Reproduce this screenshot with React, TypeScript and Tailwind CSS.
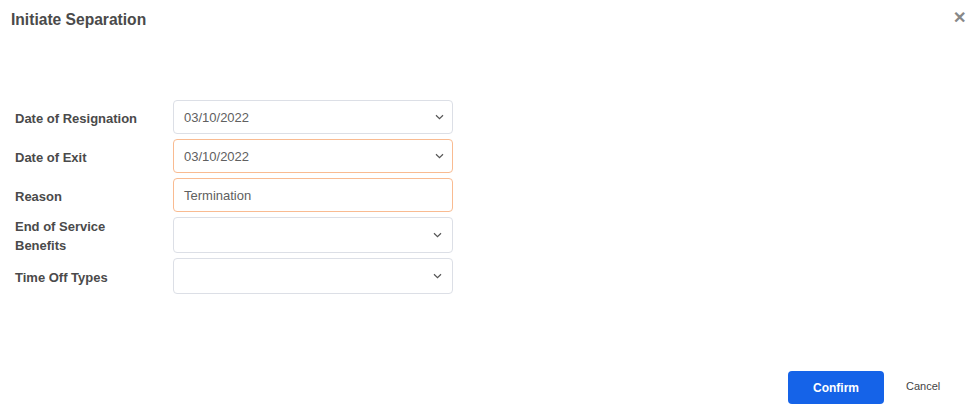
import React from "react";

const Chevron = () => (
  <svg width="9" height="6" viewBox="0 0 9 6" fill="none">
    <path d="M1 1.2 L4.5 4.6 L8 1.2" stroke="#555" strokeWidth="1.2" />
  </svg>
);

type Row = {
  label: string;
  value?: string;
  orange?: boolean;
  select?: boolean;
  tall?: boolean;
  shift?: boolean;
};

const rows: Row[] = [
  { label: "Date of Resignation", value: "03/10/2022", select: true },
  { label: "Date of Exit", value: "03/10/2022", select: true, orange: true },
  { label: "Reason", value: "Termination", orange: true },
  { label: "End of Service Benefits", select: true, tall: true, shift: true },
  { label: "Time Off Types", select: true, tall: true, shift: true },
];

export default function App() {
  return (
    <div
      className="relative flex h-[417px] w-[975px] flex-col bg-white"
      style={{ fontFamily: '"Liberation Sans", Arial, sans-serif' }}
    >
      <div className="flex items-start justify-between pl-[11px] pr-[9px] pt-[10px]">
        <h1 className="text-[15.6px] font-bold leading-[20px] text-[#4a4a4a]">Initiate Separation</h1>
        <span className="mt-[-2px] text-[16px] font-bold leading-[20px] text-[#888]">✕</span>
      </div>
      <div className="mt-[70px] flex flex-col gap-[5px] pl-[15px]">
        {rows.map((r) => (
          <div
            key={r.label}
            className={`flex items-center ${r.tall ? "h-[36px]" : "h-[34px]"}`}
          >
            <div className="w-[158px] shrink-0 pr-[20px] pt-[2px] text-[13px] font-bold leading-[19px] text-[#4a4a4a]">
              {r.label}
            </div>
            <div
              className={`flex h-full w-[280px] items-center justify-between rounded-[4px] border bg-white pl-[10px] ${
                r.shift ? "pr-[10px]" : "pr-[8px]"
              } ${r.orange ? "border-[#f9bb91]" : "border-[#dcdfe6]"}`}
            >
              <span className="pt-[2px] text-[13px] text-[#606060]">{r.value ?? ""}</span>
              {r.select && <Chevron />}
            </div>
          </div>
        ))}
      </div>
      <div className="mt-auto mb-[13px] flex items-center pl-[788px]">
        <button className="h-[33px] w-[96px] rounded-[4px] bg-[#1563e8] text-[12px] font-bold text-white">
          Confirm
        </button>
        <span className="ml-[22px] mb-[3px] text-[11px] text-[#444]">Cancel</span>
      </div>
    </div>
  );
}
